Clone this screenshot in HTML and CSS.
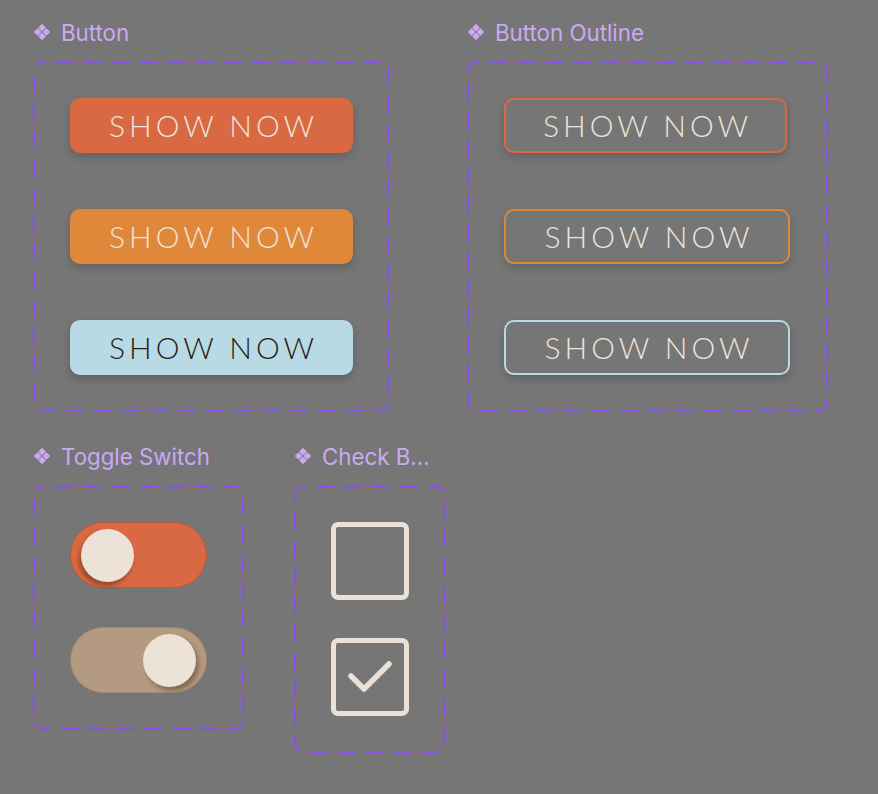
FILE: index.html
```html
<!DOCTYPE html>
<html>
<head>
    <title>Components</title>
    <link rel="stylesheet" href="styles.css">
</head>
<body>
<div class="board">
    <!-- top row: filled + outline buttons -->
    <div class="row">
        <div class="set">
            <div class="set-label">
                <svg class="set-icon" viewBox="0 0 14 14"><path d="M7 0.6L10 3.6L7 6.6L4 3.6Z M3.6 4L6.6 7L3.6 10L0.6 7Z M10.4 4L13.4 7L10.4 10L7.4 7Z M7 7.4L10 10.4L7 13.4L4 10.4Z"/></svg>
                Button
            </div>
            <div class="set-box buttons">
                <div class="btn btn-red">SHOW NOW</div>
                <div class="btn btn-orange">SHOW NOW</div>
                <div class="btn btn-blue">SHOW NOW</div>
            </div>
        </div>

        <div class="set">
            <div class="set-label">
                <svg class="set-icon" viewBox="0 0 14 14"><path d="M7 0.6L10 3.6L7 6.6L4 3.6Z M3.6 4L6.6 7L3.6 10L0.6 7Z M10.4 4L13.4 7L10.4 10L7.4 7Z M7 7.4L10 10.4L7 13.4L4 10.4Z"/></svg>
                Button Outline
            </div>
            <div class="set-box buttons outline-set">
                <div class="btn-outline line-red narrow">SHOW NOW</div>
                <div class="btn-outline line-orange">SHOW NOW</div>
                <div class="btn-outline line-blue">SHOW NOW</div>
            </div>
        </div>
    </div>

    <!-- bottom row: toggles + checkboxes -->
    <div class="row row-small">
        <div class="set">
            <div class="set-label">
                <svg class="set-icon" viewBox="0 0 14 14"><path d="M7 0.6L10 3.6L7 6.6L4 3.6Z M3.6 4L6.6 7L3.6 10L0.6 7Z M10.4 4L13.4 7L10.4 10L7.4 7Z M7 7.4L10 10.4L7 13.4L4 10.4Z"/></svg>
                Toggle Switch
            </div>
            <div class="set-box toggles">
                <div class="toggle toggle-on"><span class="knob"></span></div>
                <div class="toggle toggle-off"><span class="knob"></span></div>
            </div>
        </div>

        <div class="set">
            <div class="set-label">
                <svg class="set-icon" viewBox="0 0 14 14"><path d="M7 0.6L10 3.6L7 6.6L4 3.6Z M3.6 4L6.6 7L3.6 10L0.6 7Z M10.4 4L13.4 7L10.4 10L7.4 7Z M7 7.4L10 10.4L7 13.4L4 10.4Z"/></svg>
                Check B...
            </div>
            <div class="set-box checks">
                <div class="check"></div>
                <div class="check">
                    <svg viewBox="0 0 68 68" width="68" height="68"><polyline points="15,33 28,46 53,21" fill="none" stroke="#ece1d6" stroke-width="5.5" stroke-linecap="round" stroke-linejoin="round"/></svg>
                </div>
            </div>
        </div>
    </div>
</div>
</body>
</html>
```

FILE: styles.css
```css
/* canvas */
body {
    margin: 0;
    background-color: #767676;
    font-family: 'Inter', 'Liberation Sans', sans-serif;
}

.board {
    padding: 20px 0 0 33px;
    display: flex;
    flex-direction: column;
    gap: 32px;
}

.row {
    display: flex;
    gap: 77px;
    align-items: flex-start;
}

.row-small {
    gap: 50px;
}

/* component set label */
.set-label {
    display: flex;
    align-items: center;
    height: 24px;
    margin-bottom: 17px;
    color: #cba9f3;
    font-size: 22.3px;
    font-weight: 400;
    white-space: nowrap;
}

.set-icon {
    flex: none;
    width: 18px;
    height: 18px;
    fill: #cba9f3;
    margin: 0 10px 0 0;
}

/* dashed frames: svg strokes so the dash length can be set */
.set-box {
    box-sizing: border-box;
    border-radius: 10px;
    padding: 37px;
    display: flex;
    flex-direction: column;
    background-size: 100% 100%;
}

/* buttons */
.buttons {
    width: 357px;
    height: 351px;
    gap: 56px;
    background-image: url("data:image/svg+xml,%3Csvg xmlns='http://www.w3.org/2000/svg' width='357' height='351'%3E%3Crect x='1' y='1' width='355' height='349' rx='9' fill='none' stroke='%238c4cf0' stroke-width='2' stroke-dasharray='18 10' stroke-dashoffset='-12'/%3E%3C/svg%3E");
}

.outline-set {
    width: 361px;
    background-image: url("data:image/svg+xml,%3Csvg xmlns='http://www.w3.org/2000/svg' width='361' height='351'%3E%3Crect x='1' y='1' width='359' height='349' rx='9' fill='none' stroke='%238c4cf0' stroke-width='2' stroke-dasharray='18 10' stroke-dashoffset='-12'/%3E%3C/svg%3E");
}

.btn,
.btn-outline {
    box-sizing: border-box;
    width: 283px;
    height: 55px;
    border-radius: 10px;
    display: flex;
    justify-content: center;
    align-items: center;
    font-family: 'Lato', sans-serif;
    font-weight: 300;
    font-size: 30px;
    letter-spacing: 4px;
    padding: 0 0 2px 4px;
    color: #efe4da;
    box-shadow: 0 4px 8px rgba(0, 0, 0, 0.18);
}

.btn-red { background-color: #d96942; }
.btn-orange { background-color: #e0883a; }
.btn-blue { background-color: #b7dae5; color: #2a1d14; }

.btn-outline {
    width: 286px;
    border: 2px solid;
}

.btn-outline.narrow { width: 283px; }
.line-red { border-color: #d96942; }
.line-orange { border-color: #e0883a; }
.line-blue { border-color: #b7dae5; }

/* toggles */
.toggles {
    width: 211px;
    height: 245px;
    gap: 39px;
    background-image: url("data:image/svg+xml,%3Csvg xmlns='http://www.w3.org/2000/svg' width='211' height='245'%3E%3Crect x='1' y='1' width='209' height='243' rx='9' fill='none' stroke='%238c4cf0' stroke-width='2' stroke-dasharray='18 10' stroke-dashoffset='-12'/%3E%3C/svg%3E");
}

.toggle {
    box-sizing: border-box;
    width: 137px;
    height: 67px;
    border-radius: 34px;
    display: flex;
    align-items: center;
    padding: 0 10px;
}

.toggle-on {
    background-color: #d96942;
    border: 1px solid #b9583a;
}

.toggle-off {
    background-color: #b49a80;
    border: 1px solid #9f866d;
    justify-content: flex-end;
}

.knob {
    width: 53px;
    height: 53px;
    border-radius: 50%;
    background-color: #ece2d7;
}

.toggle-on .knob { box-shadow: -2px 4px 4px rgba(80, 30, 10, 0.45); }
.toggle-off .knob { box-shadow: 3px 4px 4px rgba(60, 40, 20, 0.4); }

/* checkboxes */
.checks {
    width: 152px;
    height: 268px;
    gap: 38px;
    background-image: url("data:image/svg+xml,%3Csvg xmlns='http://www.w3.org/2000/svg' width='152' height='268'%3E%3Crect x='1' y='1' width='150' height='266' rx='9' fill='none' stroke='%238c4cf0' stroke-width='2' stroke-dasharray='18 10' stroke-dashoffset='-12'/%3E%3C/svg%3E");
}

.check {
    box-sizing: border-box;
    width: 78px;
    height: 78px;
    border: 5px solid #ece1d6;
    border-radius: 7px;
    display: flex;
    justify-content: center;
    align-items: center;
}
```
